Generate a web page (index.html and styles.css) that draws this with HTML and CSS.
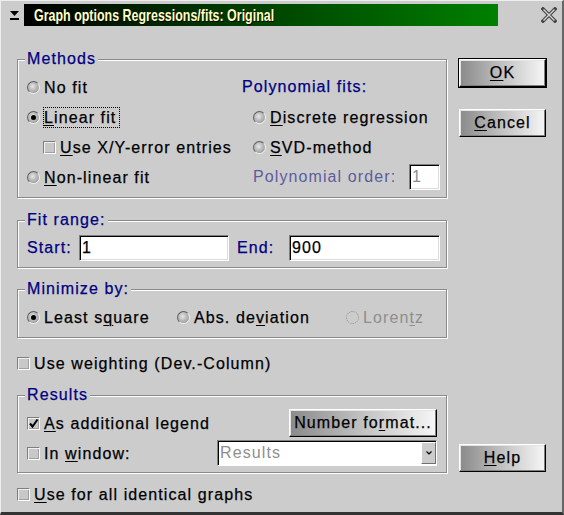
FILE: index.html
```html
<!DOCTYPE html>
<html>
<head>
<meta charset="utf-8">
<title>Graph options Regressions/fits: Original</title>
<link rel="stylesheet" href="styles.css">
</head>
<body>
<div class="window">
  <div class="titlebar">
    <div class="sysmenu">
      <svg width="10" height="9" viewBox="0 0 10 9"><path d="M0 0H9L4.5 5Z" fill="#000"/><rect x="0" y="7" width="9" height="2" fill="#000"/></svg>
    </div>
    <div class="caption"><span class="captext">Graph options Regressions/fits: Original</span></div>
    <div class="closebox">
      <svg width="16" height="16" viewBox="0 0 16 16"><path d="M2 2L14 14M14 2L2 14" stroke="#444" stroke-width="3.6" stroke-linecap="square"/><path d="M2.5 2.5L13.5 13.5M13.5 2.5L2.5 13.5" stroke="#d4d4d4" stroke-width="1.4"/></svg>
    </div>
  </div>
  <div class="content">
    <div class="form">
      <div class="group methods">
        <div class="gtitle">Methods</div>
        <div class="methods-grid">
          <div class="opt"><span class="radio"></span><span class="lbl">No fit</span></div>
          <div class="subhead">Polynomial fits:</div>
          <div class="opt"><span class="radio on"></span><span class="lbl focus"><u>L</u>inear fit</span></div>
          <div class="opt indent-r"><span class="radio"></span><span class="lbl"><u>D</u>iscrete regression</span></div>
          <div class="opt indent-c"><span class="check"></span><span class="lbl"><u>U</u>se X/Y-error entries</span></div>
          <div class="opt indent-r"><span class="radio"></span><span class="lbl"><u>S</u>VD-method</span></div>
          <div class="opt"><span class="radio"></span><span class="lbl"><u>N</u>on-linear fit</span></div>
          <div class="order"><span class="dis-blue">Polynomial order:</span><span class="field small">1</span></div>
        </div>
      </div>

      <div class="group range">
        <div class="gtitle">Fit range:</div>
        <div class="range-row">
          <span class="rl">Start:</span><span class="field wide">1</span>
          <span class="rl end">End:</span><span class="field wide last">900</span>
        </div>
      </div>

      <div class="group minimize">
        <div class="gtitle">Minimize by:</div>
        <div class="min-row">
          <div class="opt w150"><span class="radio on"></span><span class="lbl">Least s<u>q</u>uare</span></div>
          <div class="opt w169"><span class="radio"></span><span class="lbl">Abs. de<u>v</u>iation</span></div>
          <div class="opt"><span class="radio dis"></span><span class="lbl dis-grey">Loren<u>t</u>z</span></div>
        </div>
      </div>

      <div class="single weighting"><span class="check"></span><span class="lbl">Use weighting (Dev.-Column)</span></div>

      <div class="group results">
        <div class="gtitle">Results</div>
        <div class="res-row r1">
          <div class="opt"><span class="check checked"><svg width="11" height="11" viewBox="0 0 11 11"><path d="M2 5.5L4.5 8.5L9.5 1.5" fill="none" stroke="#000" stroke-width="2"/></svg></span><span class="lbl"><u>A</u>s additional legend</span></div>
          <div class="btn numfmt">Number fo<u>r</u>mat...</div>
        </div>
        <div class="res-row r2">
          <div class="opt"><span class="check"></span><span class="lbl">In <u>w</u>indow:</span></div>
          <div class="combo">
            <span class="ctext">Results</span>
            <span class="cbtn"><svg width="6" height="4" viewBox="0 0 6 4"><path d="M0.5 0.5L3 3L5.5 0.5" fill="none" stroke="#000" stroke-width="1.2"/></svg></span>
          </div>
        </div>
      </div>

      <div class="single allgraphs"><span class="check"></span><span class="lbl"><u>U</u>se for all identical graphs</span></div>
    </div>

    <div class="side">
      <div class="defwrap"><div class="btn"><u>O</u>K</div></div>
      <div class="btn cancel"><u>C</u>ancel</div>
      <div class="btn help"><u>H</u>elp</div>
    </div>
  </div>
</div>
</body>
</html>
```

FILE: styles.css
```css
* { box-sizing: border-box; }

body {
  margin: 0;
  background: #cccccc;
  font-family: "Liberation Sans", Arial, sans-serif;
  font-size: 16px;
  letter-spacing: 1.1px;
  color: #000;
  -webkit-text-stroke: 0.25px currentColor;
}

.window {
  width: 564px;
  height: 515px;
  background: #cccccc;
  border-style: solid;
  border-width: 1px 2px 3px 1px;
  border-color: #eeeeee #666666 #333333 #eeeeee;
}

/* title bar */
.titlebar {
  display: flex;
  height: 22px;
  margin-top: 3px;
}
.sysmenu {
  width: 23px;
  display: flex;
  align-items: center;
  padding-left: 9px;
}
.sysmenu svg { display: block; }
.caption {
  width: 474px;
  overflow: hidden;
  background: linear-gradient(to right, #000000 0%, #003c00 45%, #008000 100%);
  padding-left: 10px;
  line-height: 22px;
  white-space: nowrap;
}
.captext {
  display: inline-block;
  color: #ffffc4;
  font-family: "Liberation Sans", Arial, sans-serif;
  font-weight: bold;
  font-size: 16.5px;
  letter-spacing: 0;
  -webkit-text-stroke: 0;
  text-shadow: 1px 1px 0 #000;
  transform: scaleX(0.755);
  transform-origin: 0 50%;
}
.closebox {
  flex: 1;
  display: flex;
  align-items: center;
  padding-left: 43px;
}
.closebox svg { display: block; }

/* layout */
.content { display: flex; }
.form {
  width: 430px;
  margin-left: 16px;
  padding-top: 33px;
}
.side {
  margin-left: 11px;
  padding-top: 32px;
  display: flex;
  flex-direction: column;
  align-items: flex-start;
}

/* group boxes */
.group {
  border: 1px solid #8a8a8a;
  box-shadow: inset 1px 1px 0 #ffffff, 1px 1px 0 #ffffff;
  padding: 0 6px 5px 9px;
}
.gtitle {
  width: fit-content;
  margin: -10px 0 4px -2px;
  padding: 0 2px;
  background: #cccccc;
  color: #000080;
  line-height: 18px;
  white-space: nowrap;
}
.range { margin-top: 22px; padding-bottom: 6px; }
.range .gtitle { margin-bottom: 6px; }
.minimize { margin-top: 21px; }
.results { margin-top: 17px; padding-right: 9px; }
.results .gtitle { margin-bottom: 3px; }

/* options */
.methods-grid {
  display: grid;
  grid-template-columns: 215px 198px;
  grid-auto-rows: 30px;
  align-items: center;
}
.opt {
  display: flex;
  align-items: center;
  white-space: nowrap;
}
.lbl { line-height: 19px; }
.lbl.focus {
  border: 1px dotted #000;
  margin-left: -1px;
  padding-right: 3px;
}
.indent-r { margin-left: 11px; }
.indent-c { margin-left: 16px; }
.subhead { color: #000080; white-space: nowrap; }
.order {
  display: flex;
  justify-content: space-between;
  align-items: center;
  margin-left: 11px;
}
.dis-blue { color: #5c5c9e; -webkit-text-stroke: 0; }
.dis-grey { color: #8e8e8e; -webkit-text-stroke: 0; }

u {
  text-decoration-thickness: 1px;
  text-underline-offset: 2px;
}

.radio {
  flex: none;
  position: relative;
  width: 13px;
  height: 13px;
  margin-right: 4px;
  border-radius: 50%;
  border: 1px solid;
  border-color: #5e5e5e #f0f0f0 #f0f0f0 #5e5e5e;
  background: radial-gradient(circle at 42% 40%, #e6e6e6 0%, #b4b4b4 50%, #8a8a8a 100%);
}
.radio.on::after {
  content: "";
  position: absolute;
  left: 3px;
  top: 3px;
  width: 5px;
  height: 5px;
  border-radius: 50%;
  background: #000;
}
.radio.dis {
  background: none;
  border: 1px dotted #8a8a8a;
}

.check {
  flex: none;
  display: flex;
  align-items: center;
  justify-content: center;
  width: 13px;
  height: 13px;
  margin-right: 4px;
  border: 1px solid;
  border-color: #7e7e7e #ffffff #ffffff #7e7e7e;
  box-shadow: inset 1px 1px 0 #f0f0f0, inset -1px -1px 0 #a0a0a0;
  background: #c8c8c8;
}
.check svg { display: block; }

/* fields */
.field {
  display: block;
  height: 26px;
  background: #fff;
  border: 1px solid;
  border-color: #808080 #ffffff #ffffff #808080;
  box-shadow: inset 1px 1px 0 #000, inset -1px -1px 0 #dcdcdc;
  padding: 0 2px;
  line-height: 24px;
  white-space: nowrap;
}
.field.small { width: 31px; color: #8c8c8c; -webkit-text-stroke: 0; }
.field.wide { width: 150px; }
.field.last { width: 151px; }

.range-row { display: flex; align-items: center; }
.rl { width: 52px; color: #000080; }
.rl.end { margin-left: 8px; }

.min-row {
  display: flex;
  align-items: center;
  height: 30px;
}
.w150 { width: 150px; }
.w169 { width: 169px; }

.single {
  display: flex;
  align-items: center;
  height: 30px;
  white-space: nowrap;
}
.weighting { margin-top: 10px; }
.allgraphs { margin-top: 6px; }

.res-row {
  display: flex;
  justify-content: space-between;
  align-items: center;
}
.r1 { height: 32px; }
.r2 { height: 28px; }

.combo {
  display: flex;
  width: 220px;
  height: 26px;
  border: 1px solid;
  border-color: #808080 #ffffff #ffffff #808080;
  box-shadow: inset 1px 1px 0 #000;
  padding: 1px 0 1px 1px;
  background: #fff;
}
.ctext {
  flex: 1;
  color: #8e8e8e;
  -webkit-text-stroke: 0;
  line-height: 22px;
  padding-left: 1px;
}
.cbtn {
  width: 15px;
  height: 22px;
  display: flex;
  align-items: center;
  justify-content: center;
  background: #cccccc;
  border: 1px solid;
  border-color: #ffffff #707070 #707070 #ffffff;
}
.cbtn svg { display: block; }

/* buttons */
.btn {
  display: flex;
  align-items: center;
  justify-content: center;
  width: 87px;
  height: 28px;
  border: 1px solid;
  border-color: #ffffff #000000 #000000 #ffffff;
  box-shadow: inset -1px -1px 0 #808080, inset 1px 1px 0 #e4e4e4;
  background: linear-gradient(to right, #8a8a8a 0%, #c2c2c2 50%, #f6f6f6 100%);
  white-space: nowrap;
}
.defwrap { border: 1px solid #000; }
.cancel { margin-left: 1px; margin-top: 21px; }
.help { margin-left: 1px; margin-top: 307px; }
.numfmt { width: 148px; }
```
